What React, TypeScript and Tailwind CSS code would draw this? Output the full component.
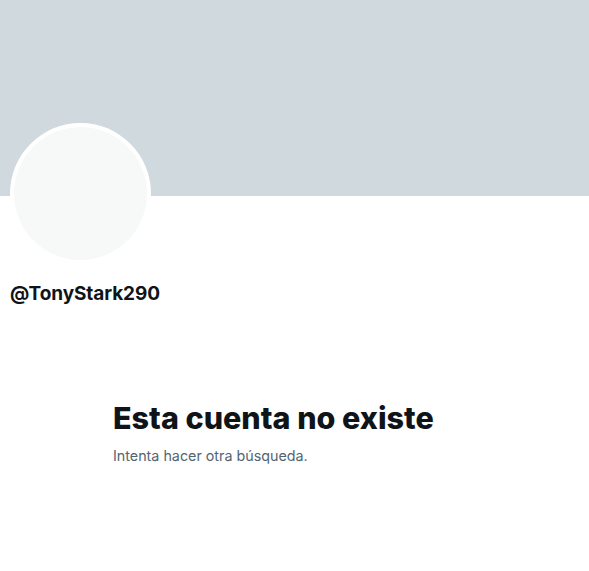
export default function App() {
  return (
    <div className="w-[589px] h-[571px] bg-white overflow-hidden" style={{ fontFamily: "Inter, 'Noto Sans', sans-serif" }}>
      <div className="h-[196px] bg-[#cfd9de]" />
      <div className="pl-[10px]">
        <div className="-mt-[73px] w-[141px] h-[141px] rounded-full bg-white p-[4px]">
          <div className="w-full h-full rounded-full bg-[#f7f9f9]" />
        </div>
        <div className="mt-[18px] text-[19px] leading-[24px] font-bold text-[#0f1419] tracking-[-0.1px]">@TonyStark290</div>
      </div>
      <div className="pl-[113px] mt-[94px]">
        <div className="text-[30.5px] leading-[36px] font-extrabold text-[#0f1419]">Esta cuenta no existe</div>
        <div className="mt-[10px] text-[14.3px] leading-[20px] text-[#536471]">Intenta hacer otra búsqueda.</div>
      </div>
    </div>
  );
}
